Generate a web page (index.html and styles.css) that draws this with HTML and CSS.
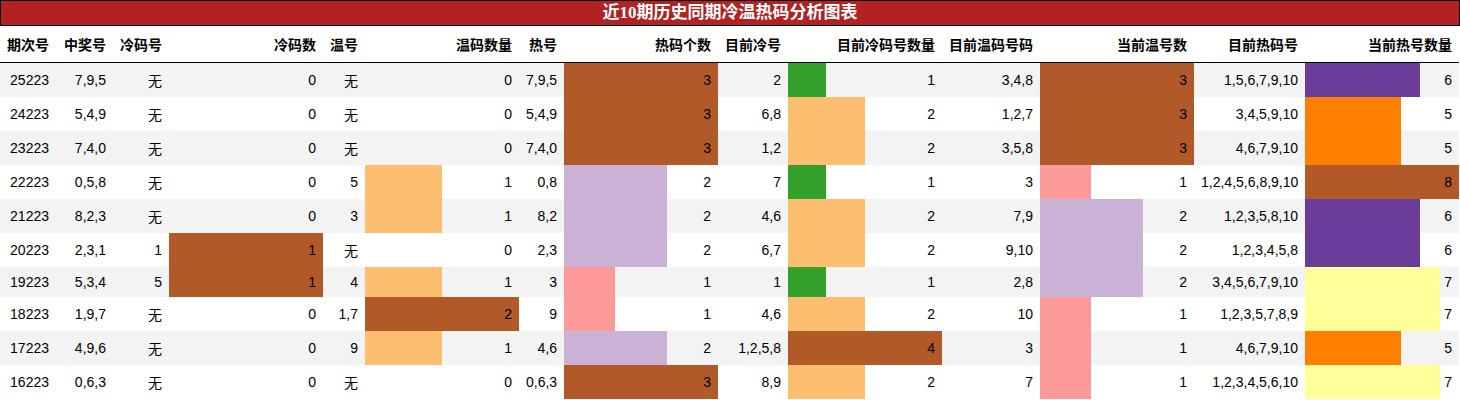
FILE: index.html
```html
<!DOCTYPE html>
<html lang="zh">
<head>
<meta charset="utf-8">
<title>近10期历史同期冷温热码分析图表</title>
<link rel="stylesheet" href="styles.css">
</head>
<body>
<div class="report">
  <div class="title">近10期历史同期冷温热码分析图表</div>
  <table class="grid">
    <colgroup>
      <col class="w56"><col class="w57"><col class="w56"><col class="w154">
      <col class="w42"><col class="w154"><col class="w45"><col class="w154">
      <col class="w70"><col class="w154"><col class="w98"><col class="w154">
      <col class="w111"><col class="w154">
    </colgroup>
    <thead>
      <tr>
        <th>期次号</th><th>中奖号</th><th>冷码号</th><th>冷码数</th><th>温号</th><th>温码数量</th><th>热号</th><th>热码个数</th><th>目前冷号</th><th>目前冷码号数量</th><th>目前温码号码</th><th>当前温号数</th><th>目前热码号</th><th>当前热号数量</th>
      </tr>
    </thead>
    <tbody>
      <tr>
        <td>25223</td><td>7,9,5</td><td>无</td><td>0</td><td>无</td><td>0</td><td>7,9,5</td>
        <td class="bar brown" style="--w:100%">3</td><td>2</td>
        <td class="bar green" style="--w:25%">1</td><td>3,4,8</td>
        <td class="bar brown" style="--w:100%">3</td><td>1,5,6,7,9,10</td>
        <td class="bar purple" style="--w:75%">6</td>
      </tr>
      <tr>
        <td>24223</td><td>5,4,9</td><td>无</td><td>0</td><td>无</td><td>0</td><td>5,4,9</td>
        <td class="bar brown" style="--w:100%">3</td><td>6,8</td>
        <td class="bar peach" style="--w:50%">2</td><td>1,2,7</td>
        <td class="bar brown" style="--w:100%">3</td><td>3,4,5,9,10</td>
        <td class="bar orange" style="--w:62.5%">5</td>
      </tr>
      <tr>
        <td>23223</td><td>7,4,0</td><td>无</td><td>0</td><td>无</td><td>0</td><td>7,4,0</td>
        <td class="bar brown" style="--w:100%">3</td><td>1,2</td>
        <td class="bar peach" style="--w:50%">2</td><td>3,5,8</td>
        <td class="bar brown" style="--w:100%">3</td><td>4,6,7,9,10</td>
        <td class="bar orange" style="--w:62.5%">5</td>
      </tr>
      <tr>
        <td>22223</td><td>0,5,8</td><td>无</td><td>0</td><td>5</td>
        <td class="bar peach" style="--w:50%">1</td><td>0,8</td>
        <td class="bar lilac" style="--w:66.667%">2</td><td>7</td>
        <td class="bar green" style="--w:25%">1</td><td>3</td>
        <td class="bar pink" style="--w:33.333%">1</td><td>1,2,4,5,6,8,9,10</td>
        <td class="bar brown" style="--w:100%">8</td>
      </tr>
      <tr>
        <td>21223</td><td>8,2,3</td><td>无</td><td>0</td><td>3</td>
        <td class="bar peach" style="--w:50%">1</td><td>8,2</td>
        <td class="bar lilac" style="--w:66.667%">2</td><td>4,6</td>
        <td class="bar peach" style="--w:50%">2</td><td>7,9</td>
        <td class="bar lilac" style="--w:66.667%">2</td><td>1,2,3,5,8,10</td>
        <td class="bar purple" style="--w:75%">6</td>
      </tr>
      <tr>
        <td>20223</td><td>2,3,1</td><td>1</td>
        <td class="bar brown" style="--w:100%">1</td><td>无</td><td>0</td><td>2,3</td>
        <td class="bar lilac" style="--w:66.667%">2</td><td>6,7</td>
        <td class="bar peach" style="--w:50%">2</td><td>9,10</td>
        <td class="bar lilac" style="--w:66.667%">2</td><td>1,2,3,4,5,8</td>
        <td class="bar purple" style="--w:75%">6</td>
      </tr>
      <tr class="short">
        <td>19223</td><td>5,3,4</td><td>5</td>
        <td class="bar brown" style="--w:100%">1</td><td>4</td>
        <td class="bar peach" style="--w:50%">1</td><td>3</td>
        <td class="bar pink" style="--w:33.333%">1</td><td>1</td>
        <td class="bar green" style="--w:25%">1</td><td>2,8</td>
        <td class="bar lilac" style="--w:66.667%">2</td><td>3,4,5,6,7,9,10</td>
        <td class="bar yellow" style="--w:87.5%">7</td>
      </tr>
      <tr>
        <td>18223</td><td>1,9,7</td><td>无</td><td>0</td><td>1,7</td>
        <td class="bar brown" style="--w:100%">2</td><td>9</td>
        <td class="bar pink" style="--w:33.333%">1</td><td>4,6</td>
        <td class="bar peach" style="--w:50%">2</td><td>10</td>
        <td class="bar pink" style="--w:33.333%">1</td><td>1,2,3,5,7,8,9</td>
        <td class="bar yellow" style="--w:87.5%">7</td>
      </tr>
      <tr>
        <td>17223</td><td>4,9,6</td><td>无</td><td>0</td><td>9</td>
        <td class="bar peach" style="--w:50%">1</td><td>4,6</td>
        <td class="bar lilac" style="--w:66.667%">2</td><td>1,2,5,8</td>
        <td class="bar brown" style="--w:100%">4</td><td>3</td>
        <td class="bar pink" style="--w:33.333%">1</td><td>4,6,7,9,10</td>
        <td class="bar orange" style="--w:62.5%">5</td>
      </tr>
      <tr>
        <td>16223</td><td>0,6,3</td><td>无</td><td>0</td><td>无</td><td>0</td><td>0,6,3</td>
        <td class="bar brown" style="--w:100%">3</td><td>8,9</td>
        <td class="bar peach" style="--w:50%">2</td><td>7</td>
        <td class="bar pink" style="--w:33.333%">1</td><td>1,2,3,4,5,6,10</td>
        <td class="bar yellow" style="--w:87.5%">7</td>
      </tr>
    </tbody>
  </table>
</div>
</body>
</html>
```

FILE: styles.css
```css
html, body {
  margin: 0;
  padding: 0;
  background: #ffffff;
}

.report {
  width: 1460px;
  font-family: "Liberation Sans", "Noto Sans CJK SC", sans-serif;
  color: #000;
}

.title {
  box-sizing: border-box;
  height: 26px;
  border: 1px solid #000;
  background: #b22222;
  color: #fff;
  font-family: "Liberation Serif", "Noto Sans CJK SC", serif;
  font-weight: bold;
  font-size: 17px;
  line-height: 24px;
  text-align: center;
}

.grid {
  width: 1459px;
  table-layout: fixed;
  border-collapse: collapse;
  border-spacing: 0;
  font-size: 14px;
}

.w42 { width: 42px; }
.w45 { width: 45px; }
.w56 { width: 56px; }
.w57 { width: 57px; }
.w70 { width: 70px; }
.w98 { width: 98px; }
.w111 { width: 111px; }
.w154 { width: 154px; }

.grid th,
.grid td {
  padding: 0 7px;
  text-align: right;
  white-space: nowrap;
  overflow: hidden;
}

.grid th {
  height: 36px;
  font-weight: bold;
  border-bottom: 1px solid #000;
}

.grid td {
  height: 34px;
}

.grid tr.short td {
  height: 30px;
}

.grid tbody tr:nth-child(odd) {
  background: #f3f3f3;
}

.grid tbody tr:nth-child(even) {
  background: #ffffff;
}

.bar {
  background: linear-gradient(90deg, var(--c) var(--w), transparent var(--w));
}

.brown { --c: #b15928; }
.peach { --c: #fdbf6f; }
.green { --c: #33a02c; }
.lilac { --c: #cab2d6; }
.pink { --c: #fb9a99; }
.purple { --c: #6a3d9a; }
.orange { --c: #ff7f00; }
.yellow { --c: #ffff99; }
```
